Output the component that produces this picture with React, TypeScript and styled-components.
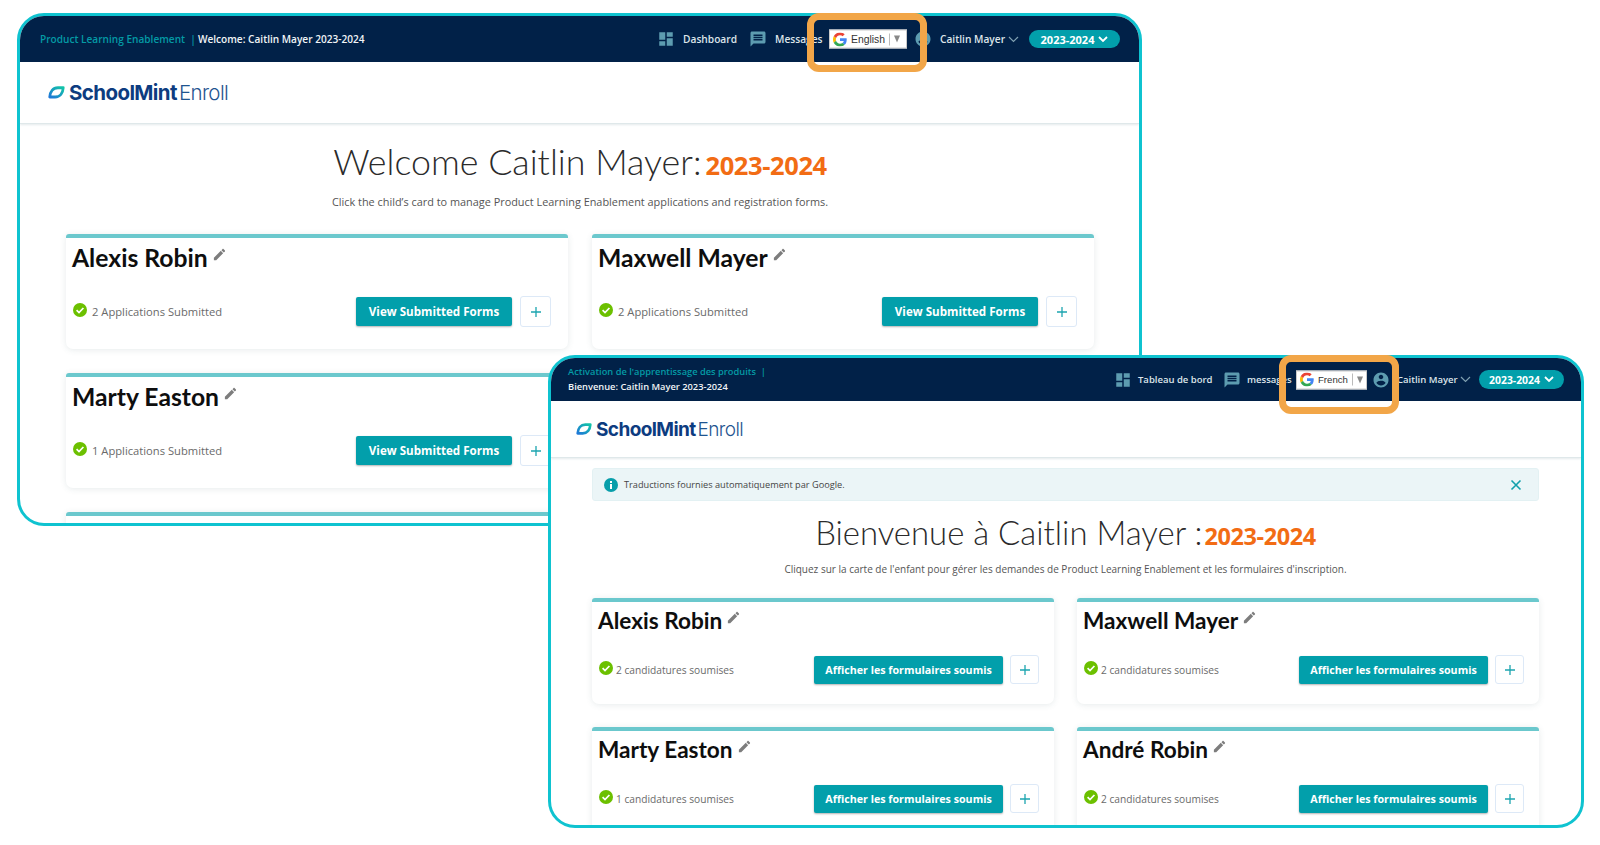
import React from "react";
import styled, { createGlobalStyle } from "styled-components";

const Global = createGlobalStyle`
  html, body { margin: 0; padding: 0; background: #fff; }
  body { font-family: "Open Sans", "Liberation Sans", sans-serif; }
  * { box-sizing: border-box; }
`;

const Canvas = styled.div`
  position: relative;
  width: 1600px;
  height: 845px;
  overflow: hidden;
  background: #fff;
`;

const Win = styled.section<{ $x: number; $y: number; $w: number; $h: number }>`
  position: absolute;
  left: ${(p) => p.$x}px;
  top: ${(p) => p.$y}px;
  width: ${(p) => p.$w}px;
  height: ${(p) => p.$h}px;
  border: 3px solid #0fc3d0;
  border-radius: 27px;
  background: #fff;
  overflow: hidden;
  display: flex;
  flex-direction: column;
`;

const TopBar = styled.header<{ $h: number; $pl: number; $pr: number }>`
  flex: none;
  position: relative;
  height: ${(p) => p.$h}px;
  padding: 0 ${(p) => p.$pr}px 0 ${(p) => p.$pl}px;
  background: #012148;
  display: flex;
  align-items: center;
  justify-content: space-between;
  font-weight: 600;
  color: #e8eef2;
`;

const Crumbs = styled.div<{ $stack?: boolean }>`
  display: flex;
  flex-direction: ${(p) => (p.$stack ? "column" : "row")};
  gap: ${(p) => (p.$stack ? 4 : 2)}px;
  font-size: ${(p) => (p.$stack ? "9.3px" : "10.1px")};
  line-height: ${(p) => (p.$stack ? "10.5px" : "14px")};
`;

const CrumbLink = styled.span`
  color: #049aa5;
  white-space: pre;
`;

const CrumbHere = styled.span`
  color: #f0f4f6;
`;

const Nav = styled.nav`
  display: flex;
  align-items: center;
`;

const NavIcon = styled.svg<{ $size: number; $mr: number }>`
  flex: none;
  width: ${(p) => p.$size}px;
  height: ${(p) => p.$size}px;
  margin-right: ${(p) => p.$mr}px;
  fill: #5d9cb0;
`;

const NavText = styled.span<{ $w: number; $size: number }>`
  width: ${(p) => p.$w}px;
  font-size: ${(p) => p.$size}px;
  white-space: nowrap;
  color: #dde5ea;
`;

const Chevron = styled.svg<{ $mr: number }>`
  flex: none;
  width: 11px;
  height: 7px;
  margin-right: ${(p) => p.$mr}px;
  fill: none;
  stroke: #7f9fb0;
  stroke-width: 1.2;
`;

const YearPill = styled.div<{ $w: number; $h: number; $size: number }>`
  width: ${(p) => p.$w}px;
  height: ${(p) => p.$h}px;
  border-radius: 10px;
  background: #029fab;
  color: #fff;
  display: flex;
  align-items: center;
  justify-content: center;
  gap: 4px;
  font-size: ${(p) => p.$size}px;
  font-weight: 700;
`;

const PillChevron = styled.svg`
  flex: none;
  width: 10px;
  height: 7px;
  fill: none;
  stroke: #fff;
  stroke-width: 1.8;
`;

const Translate = styled.div<{ $r: number; $w: number; $size: number }>`
  position: absolute;
  right: ${(p) => p.$r}px;
  top: 50%;
  transform: translateY(-50%);
  width: ${(p) => p.$w}px;
  height: 19px;
  background: #fff;
  border: 1px solid #c9c9c9;
  display: flex;
  align-items: center;
  padding-left: 3px;
  font-family: "Liberation Sans", Arial, sans-serif;
  font-size: ${(p) => p.$size}px;
  font-weight: 400;
  color: #333;
`;

const TranslateLabel = styled.span`
  margin-left: 4px;
  padding-right: 4px;
  border-right: 1px solid #bbb;
  line-height: 12px;
`;

const TranslateCaret = styled.span`
  flex: none;
  margin-left: 4px;
  width: 0;
  height: 0;
  border-left: 3.5px solid transparent;
  border-right: 3.5px solid transparent;
  border-top: 7px solid #888;
`;

const LogoBar = styled.div<{ $h: number; $pl: number }>`
  flex: none;
  height: ${(p) => p.$h}px;
  padding-left: ${(p) => p.$pl}px;
  display: flex;
  align-items: center;
  gap: 4px;
  border-bottom: 1px solid #dfe8ea;
  box-shadow: 0 1px 2px rgba(120, 150, 160, 0.2);
`;

const LogoName = styled.span<{ $size: number }>`
  font-family: Inter, "Liberation Sans", sans-serif;
  font-size: ${(p) => p.$size}px;
  letter-spacing: -0.6px;
  display: flex;
  gap: 2px;
  color: #0d3c80;
  font-weight: 700;
`;

const LogoThin = styled.span`
  font-weight: 300;
  color: #1f5590;
`;

const Main = styled.main<{ $pl: number; $pr: number; $pt: number }>`
  flex: 1;
  min-height: 0;
  padding: ${(p) => p.$pt}px ${(p) => p.$pr}px 0 ${(p) => p.$pl}px;
`;

const Notice = styled.div`
  height: 33px;
  margin-bottom: 13px;
  padding: 0 16px 0 11px;
  background: #ebf5f7;
  border: 1px solid #e3f1f3;
  border-radius: 3px;
  display: flex;
  align-items: center;
  gap: 6px;
  font-size: 9.2px;
  color: #444;
`;

const NoticeText = styled.span`
  flex: 1;
`;

const NoticeIcon = styled.svg`
  width: 14px;
  height: 14px;
`;

const CloseIcon = styled.svg`
  width: 12px;
  height: 12px;
  stroke: #13a0ac;
  stroke-width: 1.6;
  fill: none;
`;

const Title = styled.h1<{ $size: number; $lh: number; $gap: number }>`
  margin: 0;
  display: flex;
  justify-content: center;
  align-items: baseline;
  gap: ${(p) => p.$gap}px;
  line-height: ${(p) => p.$lh}px;
  font-family: Lato, "Open Sans", sans-serif;
  font-weight: 300;
  font-size: ${(p) => p.$size}px;
  color: #2b2b2b;
`;

const TitleYear = styled.span<{ $size: number }>`
  font-family: "Open Sans", sans-serif;
  font-size: ${(p) => p.$size}px;
  font-weight: 700;
  letter-spacing: -0.4px;
  color: #f26c14;
`;

const Sub = styled.p<{ $size: number; $mt: number; $mb: number }>`
  margin: ${(p) => p.$mt}px 0 ${(p) => p.$mb}px;
  text-align: center;
  font-size: ${(p) => p.$size}px;
  line-height: 16px;
  color: #555;
`;

const Cards = styled.div<{ $gx: number; $gy: number }>`
  display: grid;
  grid-template-columns: 1fr 1fr;
  gap: ${(p) => p.$gy}px ${(p) => p.$gx}px;
`;

const Card = styled.article<{ $h: number; $pl: number; $pr: number }>`
  height: ${(p) => p.$h}px;
  padding: 0 ${(p) => p.$pr}px 0 ${(p) => p.$pl}px;
  display: flex;
  flex-direction: column;
  background: #fff;
  border-top: 4px solid #6bc8cd;
  border-radius: 3px 3px 7px 7px;
  box-shadow: 0 1px 6px rgba(60, 90, 100, 0.12);
`;

const Name = styled.h2<{ $size: number; $h: number }>`
  margin: 0;
  height: ${(p) => p.$h}px;
  display: flex;
  align-items: center;
  gap: 4px;
  font-family: Lato, "Open Sans", sans-serif;
  font-weight: 700;
  font-size: ${(p) => p.$size}px;
  color: #0e0e0e;
`;

const Pencil = styled.svg`
  width: 15px;
  height: 15px;
  margin-top: -6px;
  fill: #7d7d7d;
`;

const Row = styled.div<{ $mt: number }>`
  margin-top: ${(p) => p.$mt}px;
  display: flex;
  align-items: center;
`;

const StatusIcon = styled.svg<{ $mr: number }>`
  flex: none;
  width: 14px;
  height: 14px;
  margin: -3px ${(p) => p.$mr}px 0 1px;
`;

const StatusText = styled.span<{ $size: number }>`
  flex: 1;
  font-size: ${(p) => p.$size}px;
  font-weight: 500;
  color: #6a6a6a;
`;

const Primary = styled.button<{ $w: number; $h: number; $size: number }>`
  flex: none;
  width: ${(p) => p.$w}px;
  height: ${(p) => p.$h}px;
  padding: 0;
  border: 0;
  border-radius: 2px;
  background: #029fab;
  color: #fff;
  font-family: "Open Sans", sans-serif;
  font-weight: 700;
  font-size: ${(p) => p.$size}px;
  white-space: nowrap;
  box-shadow: 0 1px 2px rgba(0, 0, 0, 0.3);
`;

const Plus = styled.button<{ $s: number; $ml: number }>`
  flex: none;
  width: ${(p) => p.$s}px;
  height: ${(p) => p.$s}px;
  margin-left: ${(p) => p.$ml}px;
  padding: 0;
  border: 1px solid #dde9f7;
  border-radius: 3px;
  background: #fff;
  color: #1ca5b0;
  display: flex;
  align-items: center;
  justify-content: center;
`;

const PlusIcon = styled.svg`
  width: 10px;
  height: 10px;
  stroke: currentColor;
  stroke-width: 1.3;
`;

const Highlight = styled.div<{ $x: number; $y: number; $w: number; $h: number }>`
  position: absolute;
  left: ${(p) => p.$x}px;
  top: ${(p) => p.$y}px;
  width: ${(p) => p.$w}px;
  height: ${(p) => p.$h}px;
  border: 7px solid #f2a648;
  border-radius: 12px;
`;

const GoogleMark = styled.svg`
  flex: none;
  width: 14px;
  height: 14px;
`;

const GoogleG = () => (
  <GoogleMark viewBox="0 0 48 48" aria-hidden="true">
    <path fill="#EA4335" d="M24 9.5c3.54 0 6.71 1.22 9.21 3.6l6.85-6.85C35.9 2.38 30.47 0 24 0 14.62 0 6.51 5.38 2.56 13.22l7.98 6.19C12.43 13.72 17.74 9.5 24 9.5z" />
    <path fill="#4285F4" d="M46.98 24.55c0-1.57-.15-3.09-.38-4.55H24v9.02h12.94c-.58 2.96-2.26 5.48-4.78 7.18l7.73 6c4.51-4.18 7.09-10.36 7.09-17.65z" />
    <path fill="#FBBC05" d="M10.53 28.59c-.48-1.45-.76-2.99-.76-4.59s.27-3.14.76-4.59l-7.98-6.19C.92 16.46 0 20.12 0 24c0 3.88.92 7.54 2.56 10.78l7.97-6.19z" />
    <path fill="#34A853" d="M24 48c6.48 0 11.93-2.13 15.89-5.81l-7.73-6c-2.15 1.45-4.92 2.3-8.16 2.3-6.26 0-11.57-4.22-13.47-9.91l-7.98 6.19C6.51 42.62 14.62 48 24 48z" />
  </GoogleMark>
);

const Leaf = ({ w, id }: { w: number; id: string }) => (
  <svg width={w} height={w * 0.75} viewBox="0 0 24 18" aria-hidden="true">
    <defs>
      <linearGradient id={id} x1="0" y1="1" x2="1" y2="0">
        <stop offset="0" stopColor="#1e78d8" />
        <stop offset="1" stopColor="#12c4a8" />
      </linearGradient>
    </defs>
    <path
      fill="none"
      stroke={`url(#${id})`}
      strokeWidth="4"
      strokeLinejoin="round"
      d="M2.500 15.500C3 8 7 2.500 14 2.500h7.500C21 10 17 15.500 10 15.500H2.500z"
    />
  </svg>
);

const cfgs = {
  en: {
    win: { x: 17, y: 13, w: 1125, h: 513 },
    barH: 46, barPl: 20, barPr: 19,
    logoH: 62, logoPl: 28, logoW: 17, logoSize: 20.5,
    pl: 46, pr: 45, pt: 18, titleSize: 35.8, yearSize: 25.5, titleLh: 40, titleGap: 4,
    subSize: 10.9, subMt: 9, subMb: 24,
    gx: 24, gy: 24, cardH: 115, cardPl: 6, cardPr: 17, nameSize: 24.7, nameH: 38, rowMt: 20,
    statusSize: 11.2, statusMr: 5, btnW: 156, btnH: 29, btnSize: 11.6, plus: 31, plusMl: 8,
    dashW: 66, msgW: 139, navSize: 10.2, nameW: 68, chevMr: 10, pillW: 91, pillH: 18, pillSize: 11,
    transR: 232, transW: 78, transSize: 10.4, iconMr: 8, nameMr: 10,
    hl: { x: 807, y: 13, w: 120, h: 59 },
  },
  fr: {
    win: { x: 548, y: 355, w: 1036, h: 473 },
    barH: 43, barPl: 17, barPr: 17,
    logoH: 57, logoPl: 25, logoW: 16, logoSize: 19,
    pl: 41, pr: 42, pt: 10, titleSize: 32.9, yearSize: 23.5, titleLh: 38, titleGap: 2,
    subSize: 10, subMt: 6, subMb: 21,
    gx: 23, gy: 23, cardH: 106, cardPl: 6, cardPr: 15, nameSize: 22.6, nameH: 36, rowMt: 17,
    statusSize: 10.2, statusMr: 3, btnW: 189, btnH: 28, btnSize: 10.7, plus: 29, plusMl: 7,
    dashW: 85, msgW: 125, navSize: 9.5, nameW: 63, chevMr: 8, pillW: 85, pillH: 19, pillSize: 10.4,
    transR: 214, transW: 71, transSize: 9.6, iconMr: 6, nameMr: 9,
    hl: { x: 1279, y: 355, w: 120, h: 59 },
  },
};

const COPY = {
  en: {
    crumb: "Product Learning Enablement  |", here: "Welcome: Caitlin Mayer 2023-2024",
    dash: "Dashboard", msg: "Messages", lang: "English",
    title: "Welcome Caitlin Mayer:",
    sub: "Click the child’s card to manage Product Learning Enablement applications and registration forms.",
    status: (n: number) => `${n} Applications Submitted`, btn: "View Submitted Forms",
  },
  fr: {
    crumb: "Activation de l'apprentissage des produits  |", here: "Bienvenue: Caitlin Mayer 2023-2024",
    dash: "Tableau de bord", msg: "messages", lang: "French",
    title: "Bienvenue à Caitlin Mayer :",
    sub: "Cliquez sur la carte de l'enfant pour gérer les demandes de Product Learning Enablement et les formulaires d'inscription.",
    status: (n: number) => `${n} candidatures soumises`, btn: "Afficher les formulaires soumis",
  },
};

const KIDS = [
  { name: "Alexis Robin", n: 2 },
  { name: "Maxwell Mayer", n: 2 },
  { name: "Marty Easton", n: 1 },
  { name: "André Robin", n: 2 },
];

const Portal = ({ lang }: { lang: "en" | "fr" }) => {
  const c = cfgs[lang];
  const t = COPY[lang];
  return (
    <Win $x={c.win.x} $y={c.win.y} $w={c.win.w} $h={c.win.h}>
      <TopBar $h={c.barH} $pl={c.barPl} $pr={c.barPr}>
        <Crumbs $stack={lang === "fr"}>
          <CrumbLink>{t.crumb}</CrumbLink>
          <CrumbHere>{t.here}</CrumbHere>
        </Crumbs>
        <Nav>
          <NavIcon $size={18} $mr={c.iconMr} viewBox="0 0 24 24">
            <path d="M3 13h8V3H3v10zm0 8h8v-6H3v6zm10 0h8V11h-8v10zm0-18v6h8V3h-8z" />
          </NavIcon>
          <NavText $w={c.dashW} $size={c.navSize}>{t.dash}</NavText>
          <NavIcon $size={18} $mr={c.iconMr} viewBox="0 0 24 24">
            <path d="M20 2H4c-1.100 0-2 .9-2 2v18l4-4h14c1.100 0 2-.9 2-2V4c0-1.100-.9-2-2-2zm-2 12H6v-2h12v2zm0-3H6V9h12v2zm0-3H6V6h12v2z" />
          </NavIcon>
          <NavText $w={c.msgW} $size={c.navSize}>{t.msg}</NavText>
          <NavIcon $size={18} $mr={c.nameMr - 2} viewBox="0 0 24 24">
            <path d="M12 2C6.480 2 2 6.480 2 12s4.480 10 10 10 10-4.480 10-10S17.520 2 12 2zm0 3c1.660 0 3 1.340 3 3s-1.340 3-3 3-3-1.340-3-3 1.340-3 3-3zm0 14.200c-2.500 0-4.710-1.280-6-3.220.03-1.990 4-3.080 6-3.080 1.990 0 5.970 1.090 6 3.080-1.290 1.940-3.500 3.220-6 3.220z" />
          </NavIcon>
          <NavText $w={c.nameW} $size={c.navSize}>Caitlin Mayer</NavText>
          <Chevron $mr={c.chevMr} viewBox="0 0 11 7">
            <path d="M1 1l4.500 4.500L10 1" />
          </Chevron>
          <YearPill $w={c.pillW} $h={c.pillH} $size={c.pillSize}>
            2023-2024
            <PillChevron viewBox="0 0 10 7">
              <path d="M1 1l4 4 4-4" />
            </PillChevron>
          </YearPill>
        </Nav>
        <Translate $r={c.transR} $w={c.transW} $size={c.transSize}>
          <GoogleG />
          <TranslateLabel>{t.lang}</TranslateLabel>
          <TranslateCaret />
        </Translate>
      </TopBar>
      <LogoBar $h={c.logoH} $pl={c.logoPl}>
        <Leaf w={c.logoW} id={`leaf-${lang}`} />
        <LogoName $size={c.logoSize}>
          SchoolMint<LogoThin>Enroll</LogoThin>
        </LogoName>
      </LogoBar>
      <Main $pl={c.pl} $pr={c.pr} $pt={c.pt}>
        {lang === "fr" && (
          <Notice>
            <NoticeIcon viewBox="0 0 14 14">
              <circle cx="7" cy="7" r="7" fill="#089eaa" />
              <rect x="6" y="6" width="2" height="5" fill="#fff" />
              <rect x="6" y="3" width="2" height="2" fill="#fff" />
            </NoticeIcon>
            <NoticeText>Traductions fournies automatiquement par Google.</NoticeText>
            <CloseIcon viewBox="0 0 12 12">
              <path d="M1.500 1.500l9 9M10.500 1.500l-9 9" />
            </CloseIcon>
          </Notice>
        )}
        <Title $size={c.titleSize} $lh={c.titleLh} $gap={c.titleGap}>
          {t.title}
          <TitleYear $size={c.yearSize}>2023-2024</TitleYear>
        </Title>
        <Sub $size={c.subSize} $mt={c.subMt} $mb={c.subMb}>{t.sub}</Sub>
        <Cards $gx={c.gx} $gy={c.gy}>
          {KIDS.map((k) => (
            <Card key={k.name} $h={c.cardH} $pl={c.cardPl} $pr={c.cardPr}>
              <Name $size={c.nameSize} $h={c.nameH}>
                {k.name}
                <Pencil viewBox="0 0 24 24">
                  <path d="M3 17.250V21h3.750L17.810 9.940l-3.750-3.750L3 17.250zM20.710 7.040c.39-.39.39-1.020 0-1.410l-2.340-2.340c-.39-.39-1.020-.39-1.410 0l-1.830 1.830 3.750 3.750 1.830-1.830z" />
                </Pencil>
              </Name>
              <Row $mt={c.rowMt}>
                <StatusIcon $mr={c.statusMr} viewBox="0 0 14 14">
                  <circle cx="7" cy="7" r="7" fill="#6cc000" />
                  <path d="M3.600 7.200l2.400 2.400 4.400-4.600" fill="none" stroke="#fff" strokeWidth="1.700" />
                </StatusIcon>
                <StatusText $size={c.statusSize}>{t.status(k.n)}</StatusText>
                <Primary $w={c.btnW} $h={c.btnH} $size={c.btnSize}>{t.btn}</Primary>
                <Plus $s={c.plus} $ml={c.plusMl}>
                  <PlusIcon viewBox="0 0 10 10">
                    <path d="M5 0v10M0 5h10" />
                  </PlusIcon>
                </Plus>
              </Row>
            </Card>
          ))}
          <Card $h={c.cardH} $pl={c.cardPl} $pr={c.cardPr} />
          <Card $h={c.cardH} $pl={c.cardPl} $pr={c.cardPr} />
        </Cards>
      </Main>
    </Win>
  );
};

export default function App() {
  return (
    <Canvas>
      <Global />
      <Portal lang="en" />
      <Highlight $x={cfgs.en.hl.x} $y={cfgs.en.hl.y} $w={cfgs.en.hl.w} $h={cfgs.en.hl.h} />
      <Portal lang="fr" />
      <Highlight $x={cfgs.fr.hl.x} $y={cfgs.fr.hl.y} $w={cfgs.fr.hl.w} $h={cfgs.fr.hl.h} />
    </Canvas>
  );
}
